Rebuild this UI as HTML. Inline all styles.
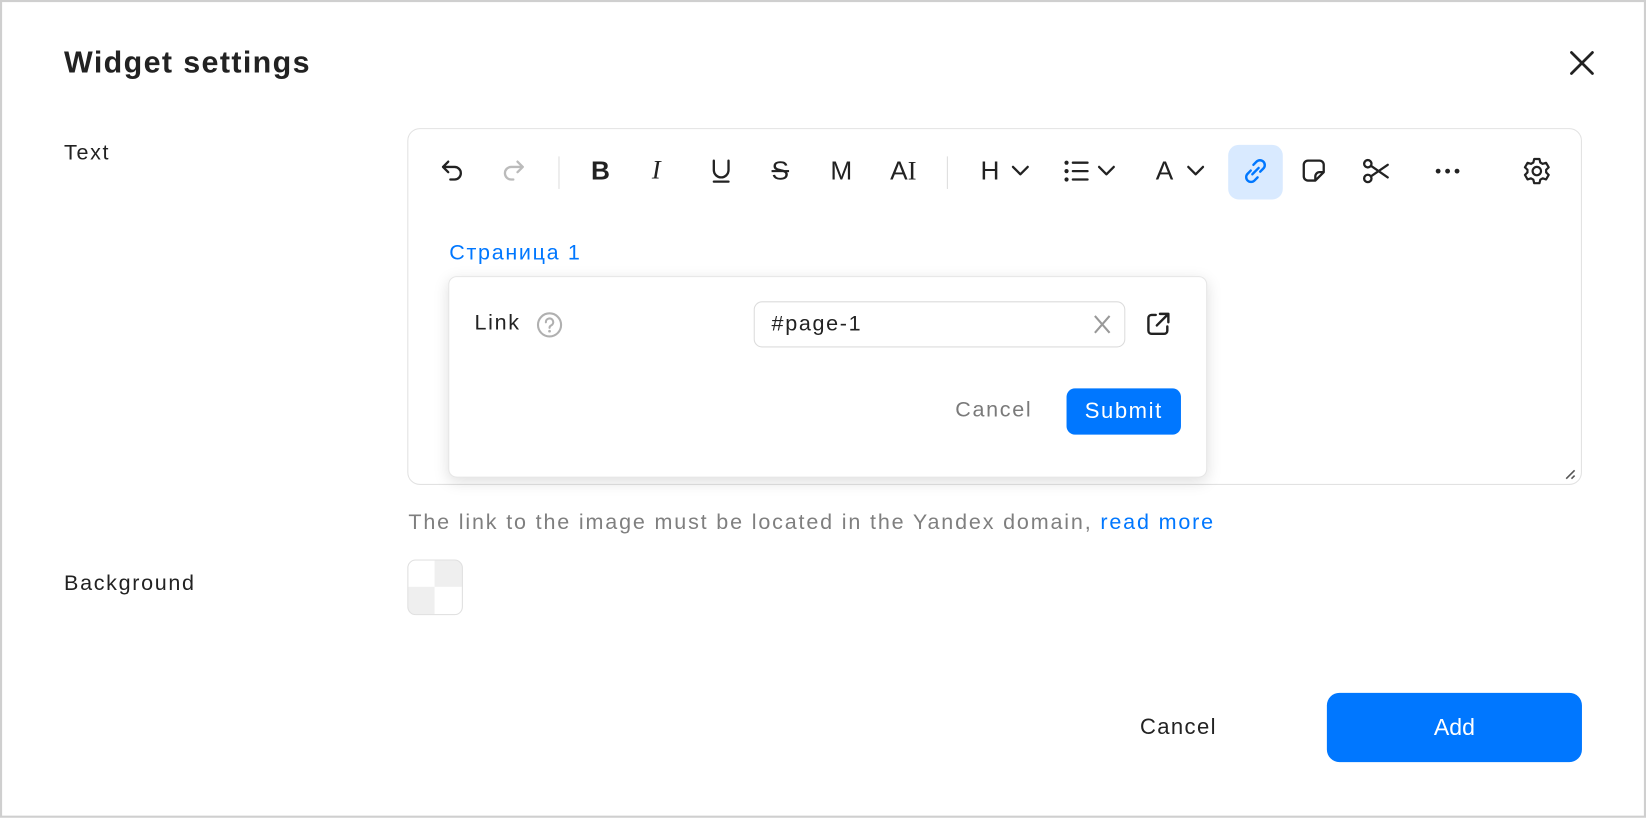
<!DOCTYPE html>
<html><head><meta charset="utf-8"><style>
html,body{margin:0;padding:0;background:#fff;overflow:hidden}
body{width:1646px;height:818px}
#w{position:absolute;left:0;top:0;width:1568px;height:779px;transform:scale(1.04974);transform-origin:0 0;font-family:"Liberation Sans","Noto Sans CJK SC",sans-serif;color:#222}
.a{position:absolute}
.frame{left:0;top:0;width:1564px;height:775px;border:2px solid #cfcfcf}
.t{font-size:20.5px;line-height:24px;white-space:nowrap;letter-spacing:1.6px}
.ic{position:absolute;top:149px;width:28px;height:28px}
svg{overflow:visible}
</style></head><body><div id="w">
<div class="a frame"></div>
<div class="a" style="left:61px;top:43px;font-size:29px;font-weight:bold;letter-spacing:1.3px;line-height:34px">Widget settings</div>
<svg class="a" style="left:1496px;top:49px" width="22" height="22"><path d="M1 1L21 21M21 1L1 21" stroke="#222" stroke-width="2.6" stroke-linecap="round"/></svg>
<div class="a t" style="left:61px;top:134px">Text</div>
<div class="a" style="left:388px;top:122px;width:1117px;height:338px;border:1px solid #e2e2e2;border-radius:12px"></div>
<!-- toolbar -->
<svg class="ic" style="left:418px"><path d="M9 5L4 10L9 15M4 10H15a6 6 0 0 1 0 12H11" fill="none" stroke="#222" stroke-width="2.2" stroke-linecap="round" stroke-linejoin="round"/></svg>
<svg class="ic" style="left:474px"><path d="M19 5L24 10L19 15M24 10H13a6 6 0 0 0 0 12H15" fill="none" stroke="#bbb" stroke-width="2.2" stroke-linecap="round" stroke-linejoin="round"/></svg>
<div class="a" style="left:532px;top:149px;width:1px;height:31px;background:#ddd"></div>
<div class="a" style="left:563px;top:148px;font-size:25px;font-weight:bold;line-height:30px">B</div>
<div class="a" style="left:621px;top:148px;font-size:25px;font-style:italic;font-family:'Liberation Serif',serif;line-height:30px">I</div>
<svg class="ic" style="left:674px"><path d="M6 4V13a7 7 0 0 0 14 0V4M6 24H20" fill="none" stroke="#222" stroke-width="2.2" stroke-linecap="round"/></svg>
<div class="a" style="left:735px;top:148px;font-size:25px;line-height:30px;text-decoration:line-through">S</div>
<div class="a" style="left:791px;top:148px;font-size:25px;line-height:30px">M</div>
<div class="a" style="left:848px;top:148px;font-size:25px;line-height:30px">A<span style="font-family:'Liberation Serif',serif">I</span></div>
<div class="a" style="left:902px;top:149px;width:1px;height:31px;background:#ddd"></div>
<div class="a" style="left:934px;top:148px;font-size:25px;line-height:30px">H</div>
<svg class="ic" style="left:961px"><path d="M4 10L11 17L18 10" fill="none" stroke="#222" stroke-width="2.2" stroke-linecap="round" stroke-linejoin="round"/></svg>
<svg class="ic" style="left:1013px"><circle cx="3" cy="6" r="2" fill="#222"/><circle cx="3" cy="14" r="2" fill="#222"/><circle cx="3" cy="22" r="2" fill="#222"/><path d="M9 6H23M9 14H23M9 22H23" stroke="#222" stroke-width="2.2" stroke-linecap="round"/></svg>
<svg class="ic" style="left:1043px"><path d="M4 10L11 17L18 10" fill="none" stroke="#222" stroke-width="2.2" stroke-linecap="round" stroke-linejoin="round"/></svg>
<div class="a" style="left:1101px;top:148px;font-size:25px;line-height:30px">A</div>
<svg class="ic" style="left:1128px"><path d="M4 10L11 17L18 10" fill="none" stroke="#222" stroke-width="2.2" stroke-linecap="round" stroke-linejoin="round"/></svg>
<div class="a" style="left:1170px;top:138px;width:52px;height:52px;border-radius:10px;background:#d9eaff"></div>
<svg class="ic" style="left:1182px"><path d="M12 8l3-3a4.5 4.5 0 0 1 6.5 6.5l-3 3M16 20l-3 3a4.5 4.5 0 0 1-6.5-6.5l3-3M11 17l6-6" fill="none" stroke="#0077ff" stroke-width="2.3" stroke-linecap="round"/></svg>
<svg class="ic" style="left:1238px"><path d="M23 15V8a4 4 0 0 0-4-4H8a4 4 0 0 0-4 4v11a4 4 0 0 0 4 4h7zM15 23v-4a4 4 0 0 1 4-4h4" fill="none" stroke="#222" stroke-width="2.2" stroke-linejoin="round"/></svg>
<svg class="ic" style="left:1297px"><circle cx="6" cy="7" r="3.5" fill="none" stroke="#222" stroke-width="2.2"/><circle cx="6" cy="21" r="3.5" fill="none" stroke="#222" stroke-width="2.2"/><path d="M9 9L25 20M9 19L25 8" stroke="#222" stroke-width="2.2" stroke-linecap="round"/></svg>
<svg class="ic" style="left:1366px"><circle cx="4" cy="14" r="2.3" fill="#222"/><circle cx="13" cy="14" r="2.3" fill="#222"/><circle cx="22" cy="14" r="2.3" fill="#222"/></svg>
<svg class="ic" style="left:1450px"><path d="M11.5 2.5h5l.8 3.3 2.3 1.3 3.2-1 2.5 4.3-2.4 2.3v2.6l2.4 2.3-2.5 4.3-3.2-1-2.3 1.3-.8 3.3h-5l-.8-3.3-2.3-1.3-3.2 1-2.5-4.3 2.4-2.3v-2.6L2.7 10.4l2.5-4.3 3.2 1 2.3-1.3z" fill="none" stroke="#222" stroke-width="2.1" stroke-linejoin="round"/><circle cx="14" cy="14" r="4" fill="none" stroke="#222" stroke-width="2.1"/></svg>
<div class="a t" style="left:428px;top:229px;color:#0077ff">Страница 1</div>
<svg class="a" style="left:1490px;top:446px" width="12" height="12"><path d="M2 10L10 2M7 10L10 7" stroke="#555" stroke-width="1.5"/></svg>
<!-- popup -->
<div class="a" style="left:427px;top:263px;width:721px;height:190px;background:#fff;border-radius:8px;border:1px solid #e6e6e6;box-shadow:0 4px 14px rgba(0,0,0,.13)"></div>
<div class="a t" style="left:452px;top:296px">Link</div>
<svg class="a" style="left:511px;top:297px" width="25" height="25"><circle cx="12.5" cy="12.5" r="11" fill="none" stroke="#b0b0b0" stroke-width="2"/><path d="M9 10a3.5 3.5 0 1 1 5 3c-1.2.6-1.5 1.2-1.5 2.3" fill="none" stroke="#b0b0b0" stroke-width="2" stroke-linecap="round"/><circle cx="12.5" cy="18.5" r="1.3" fill="#b0b0b0"/></svg>
<div class="a" style="left:718px;top:287px;width:352px;height:42px;border:1px solid #dcdcdc;border-radius:8px"></div>
<div class="a t" style="left:735px;top:297px">#page-1</div>
<svg class="a" style="left:1042px;top:300px" width="16" height="18"><path d="M1 1L15 17M15 1L1 17" stroke="#999" stroke-width="2"/></svg>
<svg class="a" style="left:1090px;top:296px" width="26" height="26"><path d="M11 4H7a3 3 0 0 0-3 3v12a3 3 0 0 0 3 3h12a3 3 0 0 0 3-3v-4M15 3h8v8M23 3L12 14" fill="none" stroke="#222" stroke-width="2.3" stroke-linecap="round" stroke-linejoin="round"/></svg>
<div class="a t" style="left:910px;top:379px;color:#7a7a7a">Cancel</div>
<div class="a" style="left:1016px;top:370px;width:109px;height:44px;background:#0077ff;border-radius:8px;color:#fff;font-size:21px;letter-spacing:1.5px;line-height:44px;text-align:center">Submit</div>
<div class="a t" style="left:389px;top:486px;color:#7f7f7f;letter-spacing:1.75px">The link to the image must be located in the Yandex domain, <span style="color:#0077ff">read more</span></div>
<div class="a t" style="left:61px;top:544px">Background</div>
<div class="a" style="left:388px;top:533px;width:51px;height:51px;border:1px solid #e0e0e0;border-radius:8px;overflow:hidden;background:linear-gradient(#fff,#fff) 0 0/25px 25px no-repeat,linear-gradient(#fff,#fff) 25px 25px/26px 26px no-repeat,#efefef"></div>
<div class="a" style="left:1086px;top:680px;font-size:21px;letter-spacing:1.3px;line-height:26px">Cancel</div>
<div class="a" style="left:1264px;top:660px;width:243px;height:66px;background:#0077ff;border-radius:12px;color:#fff;font-size:22px;line-height:66px;text-align:center">Add</div>
</div></body></html>
